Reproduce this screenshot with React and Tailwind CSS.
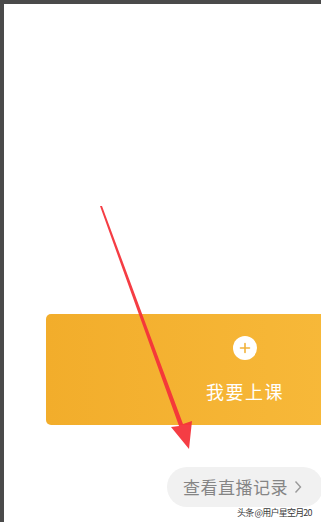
export default function App() {
  return (
    <div className="relative w-[321px] h-[522px] overflow-hidden bg-white border-t-4 border-l-4 border-[#4a4a4a]" style={{ fontFamily: '"Noto Sans CJK SC", "Noto Sans", sans-serif' }}>
      <div className="ml-[42px] mt-[310px] w-[398px] h-[111px] rounded-[5px] bg-gradient-to-r from-[#f2ad2b] to-[#f9bd3e] flex flex-col items-center pt-[22px]">
        <div className="w-[24px] h-[24px] rounded-full bg-white flex items-center justify-center">
          <svg width="12" height="12" viewBox="0 0 12 12">
            <path d="M6 1.5V10.5M1.5 6H10.5" stroke="#f2b23a" strokeWidth="1.6" strokeLinecap="round" />
          </svg>
        </div>
        <div className="mt-[21px] text-white text-[18px] leading-[20px] tracking-[1.5px]">我要上课</div>
      </div>
      <div className="ml-[163px] mt-[42px] w-[156px] h-[40px] rounded-full bg-[#f1f1f1] flex items-center pl-[16px] text-[#858585] text-[17px]">
        <span className="tracking-[0.5px]">查看直播记录</span>
        <svg className="ml-[6px]" width="8" height="14" viewBox="0 0 8 14">
          <path d="M1.5 1.5L6.5 7L1.5 12.5" stroke="#9a9a9a" strokeWidth="1.4" fill="none" />
        </svg>
      </div>
      <div className="absolute left-[233px] top-[503px] text-[9px] leading-[11px] tracking-[-0.8px] text-[#3a3a3a] whitespace-nowrap">头条 @用户星空月20</div>
      <svg className="absolute left-[-4px] top-[-4px]" width="321" height="522" viewBox="0 0 321 522">
        <polygon points="100,206 102,206 183,424 192,421 189,449 171,427 179,426" fill="#f4333a" opacity="0.95" />
      </svg>
    </div>
  );
}
